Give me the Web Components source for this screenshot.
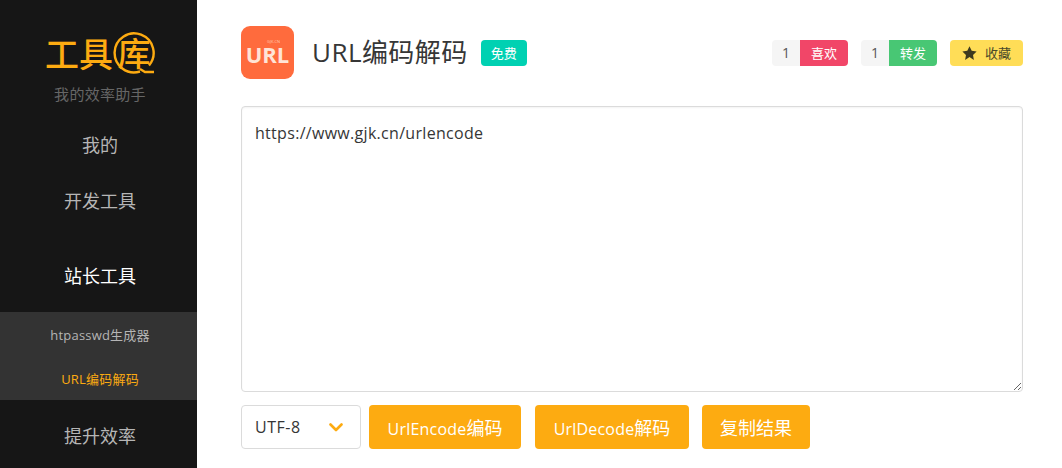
<!DOCTYPE html>
<html lang="zh">
<head>
<meta charset="utf-8">
<title>URL编码解码</title>
<style>
  html, body { margin: 0; height: 100%; overflow: hidden; }
  body { font-family: "Open Sans", "Noto Sans CJK SC", sans-serif; color: #363636; background: #fff; }
</style>
</head>
<body>
<tool-layout>
  <tool-sidebar slot="sidebar">
    <side-item>我的</side-item>
    <side-item>开发工具</side-item>
    <side-group label="站长工具">
      <side-sub>htpasswd生成器</side-sub>
      <side-sub active>URL编码解码</side-sub>
    </side-group>
    <side-item>提升效率</side-item>
  </tool-sidebar>
  <tool-header slot="content" title="URL编码解码"></tool-header>
  <url-form slot="content"></url-form>
</tool-layout>

<script>
class ToolLayout extends HTMLElement {
  constructor() {
    super();
    const shadow = this.attachShadow({ mode: 'open' })
    shadow.innerHTML = `
      <style>
        :host {
          display: grid;
          grid-template-columns: 197px 1fr;
          height: 468px;
          overflow: hidden;
        }
        main { padding: 26px 39px 0 44px; min-width: 0; }
      </style>
      <slot name="sidebar"></slot>
      <main><slot name="content"></slot></main>
    `
  }
}

class ToolSidebar extends HTMLElement {
  constructor() {
    super();
    const shadow = this.attachShadow({ mode: 'open' })
    shadow.innerHTML = `
      <style>
        :host { display: block; background: #161616; height: 468px; overflow: hidden; }
        .logo {
          display: flex;
          align-items: center;
          height: 45px;
          margin-top: 30px;
          padding-left: 45px;
          color: #fdab11;
          font: 500 34px/45px "Noto Sans CJK SC", sans-serif;
        }
        .ring {
          width: 42px;
          height: 42px;
          position: relative;
          text-align: center;
          font-size: 33px;
          line-height: 40px;
        }
        .ring svg { position: absolute; left: 0; top: 0; width: 42px; height: 42px; }
        .tag {
          text-align: center;
          font-size: 15px;
          letter-spacing: .3px;
          line-height: 20px;
          margin: 9px 0 13px;
          padding-left: 3px;
          color: #666;
        }
      </style>
      <div class="logo"><span>工具</span><span class="ring"><svg viewBox="0 0 42 42"><path d="M27 39.5A19.5 19.5 0 1 1 36 33.5M27 37l5 3h9" fill="none" stroke="#fdab11" stroke-width="2.4"/></svg>库</span></div>
      <div class="tag">我的效率助手</div>
      <slot></slot>
    `
  }
}

class SideItem extends HTMLElement {
  constructor() {
    super();
    const shadow = this.attachShadow({ mode: 'open' })
    shadow.innerHTML = `
      <style>
        :host {
          display: block;
          height: 56px;
          line-height: 56px;
          padding-left: 3px;
          text-align: center;
          font-size: 18px;
          color: #b5b5b5;
        }
      </style>
      <slot></slot>
    `
  }
}

class SideGroup extends HTMLElement {
  constructor() {
    super();
    const shadow = this.attachShadow({ mode: 'open' })
    shadow.innerHTML = `
      <style>
        :host { display: block; margin: 19px 0 8px; }
        .label {
          height: 56px;
          line-height: 56px;
          margin-bottom: 8px;
          padding-left: 3px;
          text-align: center;
          font-size: 18px;
          color: #fff;
        }
        .subs { background: #333; }
      </style>
      <div class="label">${this.getAttribute('label')}</div>
      <div class="subs"><slot></slot></div>
    `
  }
}

class SideSub extends HTMLElement {
  constructor() {
    super();
    const shadow = this.attachShadow({ mode: 'open' })
    shadow.innerHTML = `
      <style>
        :host {
          display: block;
          height: 44px;
          line-height: 46px;
          padding-left: 3px;
          text-align: center;
          font-size: 13px;
          letter-spacing: .2px;
          color: #b5b5b5;
        }
        :host([active]) { color: #fdab11; }
      </style>
      <slot></slot>
    `
  }
}

class ToolHeader extends HTMLElement {
  constructor() {
    super();
    const shadow = this.attachShadow({ mode: 'open' })
    shadow.innerHTML = `
      <style>
        :host { display: flex; align-items: center; height: 53px; margin-bottom: 27px; }
        .icon {
          width: 53px;
          height: 53px;
          box-sizing: border-box;
          padding-top: 14px;
          border-radius: 9px;
          background: #ff6b3d;
          color: #ffe4d6;
          text-align: center;
          font: 700 22px/16px "Open Sans", sans-serif;
        }
        .icon small {
          display: block;
          height: 4px;
          margin-bottom: 2px;
          padding-left: 12px;
          font: 400 4px/4px "Open Sans", sans-serif;
          color: #ffc9b0;
        }
        h1 { margin: 0 13px 0 18px; font-size: 26px; font-weight: 400; line-height: 53px; letter-spacing: .45px; }
        .free {
          background: #00d1b2;
          color: #fff;
          font-size: 13px;
          line-height: 26px;
          height: 26px;
          padding: 0 10px;
          border-radius: 4px;
        }
        .right { margin-left: auto; display: flex; gap: 13px; }
      </style>
      <div class="icon"><small>GJK.CN</small>URL</div>
      <h1>${this.getAttribute('title')}</h1>
      <span class="free">免费</span>
      <div class="right">
        <count-tag count="1" color="#f14668">喜欢</count-tag>
        <count-tag count="1" color="#48c774">转发</count-tag>
        <star-tag>收藏</star-tag>
      </div>
    `
  }
}

class CountTag extends HTMLElement {
  constructor() {
    super();
    const shadow = this.attachShadow({ mode: 'open' })
    shadow.innerHTML = `
      <style>
        :host { display: flex; height: 26px; font-size: 13px; line-height: 26px; border-radius: 4px; overflow: hidden; }
        .n { width: 28px; text-align: center; background: #f5f5f5; color: #555; font-size: 14px; }
        .t { width: 48px; text-align: center; color: #fff; background: ${this.getAttribute('color')}; }
      </style>
      <span class="n">${this.getAttribute('count')}</span>
      <span class="t"><slot></slot></span>
    `
  }
}

class StarTag extends HTMLElement {
  constructor() {
    super();
    const shadow = this.attachShadow({ mode: 'open' })
    shadow.innerHTML = `
      <style>
        :host {
          display: flex;
          align-items: center;
          height: 26px;
          width: 73px;
          box-sizing: border-box;
          padding-left: 12px;
          font-size: 13px;
          background: #ffdd57;
          color: #4a4a2a;
          border-radius: 4px;
        }
        svg { width: 15px; height: 14px; margin-right: 8px; }
      </style>
      <svg viewBox="0 0 24 23"><path fill="#3d3a1e" d="M12 .6l3.6 7.4 8.1 1.2-5.9 5.7 1.4 8.1L12 18.2 4.8 23l1.4-8.1L.3 9.2l8.1-1.2z"/></svg>
      <slot></slot>
    `
  }
}

class UrlForm extends HTMLElement {
  constructor() {
    super();
    const shadow = this.attachShadow({ mode: 'open' })
    shadow.innerHTML = `
      <style>
        :host { display: block; }
        textarea {
          display: block;
          box-sizing: border-box;
          width: 100%;
          height: 286px;
          padding: 13px 13px;
          border: 1px solid #dbdbdb;
          border-radius: 4px;
          font: 400 16px/26px "Open Sans", "Noto Sans CJK SC", sans-serif;
          letter-spacing: .3px;
          color: #363636;
          box-shadow: inset 0 1px 2px rgba(10,10,10,.05);
          outline: none;
        }
        .row { display: flex; margin-top: 13px; }
        .sel {
          box-sizing: border-box;
          width: 120px;
          height: 44px;
          display: flex;
          align-items: center;
          justify-content: space-between;
          padding: 0 17px 0 13px;
          margin-right: 8px;
          border: 1px solid #dbdbdb;
          border-radius: 4px;
          font-size: 16px;
          letter-spacing: .5px;
        }
        .sel svg { width: 14px; height: 9px; }
        button {
          height: 44px;
          padding: 0;
          border: 0;
          border-radius: 4px;
          background: #fdab11;
          color: #fff;
          font: 400 16px "Open Sans", "Noto Sans CJK SC", sans-serif;
          letter-spacing: .2px;
        }
        button b { font-weight: 400; font-size: 18px; letter-spacing: 0; }
        .b1 { width: 152px; }
        .b2 { width: 154px; margin-left: 14px; }
        .b3 { width: 108px; margin-left: 13px; }
      </style>
      <textarea spellcheck="false">https://www.gjk.cn/urlencode</textarea>
      <div class="row">
        <div class="sel"><span>UTF-8</span><svg viewBox="0 0 14 9"><path d="M1.5 1.5l5.5 5.5 5.5-5.5" fill="none" stroke="#fdab11" stroke-width="2.6" stroke-linecap="round" stroke-linejoin="round"/></svg></div>
        <button class="b1">UrlEncode<b>编码</b></button>
        <button class="b2">UrlDecode<b>解码</b></button>
        <button class="b3"><b>复制结果</b></button>
      </div>
    `
  }
}

customElements.define('tool-layout', ToolLayout)
customElements.define('tool-sidebar', ToolSidebar)
customElements.define('side-item', SideItem)
customElements.define('side-group', SideGroup)
customElements.define('side-sub', SideSub)
customElements.define('tool-header', ToolHeader)
customElements.define('count-tag', CountTag)
customElements.define('star-tag', StarTag)
customElements.define('url-form', UrlForm)
</script>
</body>
</html>
